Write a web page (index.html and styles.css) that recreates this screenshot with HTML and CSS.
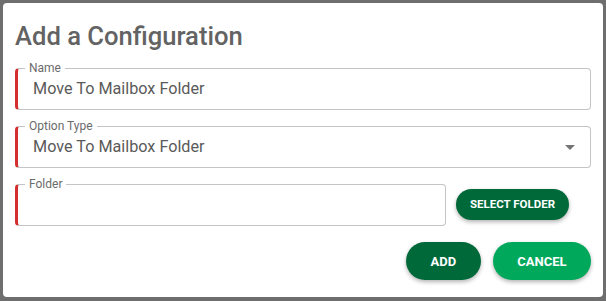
FILE: index.html
```html
<!DOCTYPE html>
<html lang="en">
<head>
<meta charset="utf-8">
<title>Add a Configuration</title>
<link rel="stylesheet" href="styles.css">
</head>
<body>
<div class="dialog">
  <h1 class="title">Add a Configuration</h1>
  <fieldset class="field">
    <legend class="label">Name</legend>
    <div class="value">Move To Mailbox Folder</div>
  </fieldset>
  <fieldset class="field">
    <legend class="label">Option Type</legend>
    <div class="select-row">
      <div class="value">Move To Mailbox Folder</div>
      <svg class="arrow" width="10" height="5" viewBox="0 0 10 5"><path d="M0 0l5 5 5-5z" fill="#757575"/></svg>
    </div>
  </fieldset>
  <div class="folder-row">
    <fieldset class="field folder">
      <legend class="label">Folder</legend>
      <div class="value">&nbsp;</div>
    </fieldset>
    <button class="btn btn-dark btn-small">Select Folder</button>
  </div>
  <div class="actions">
    <button class="btn btn-dark btn-large">Add</button>
    <button class="btn btn-light btn-large">Cancel</button>
  </div>
</div>
</body>
</html>
```

FILE: styles.css
```css
html, body {
  margin: 0;
  padding: 0;
}
body {
  background: #6e6e6e;
  width: 606px;
  height: 301px;
  overflow: hidden;
  font-family: Roboto, "Liberation Sans", sans-serif;
}
.dialog {
  box-sizing: border-box;
  margin: 3px;
  width: 600px;
  height: 294px;
  background: #fff;
  border-radius: 4px;
  padding: 19px 12px 0 12px;
}
.title {
  margin: 0 0 11px 0;
  font-size: 25.6px;
  line-height: 28px;
  font-weight: 500;
  color: #636363;
}
.field {
  margin: 0 0 9px 0;
  border: 1px solid #c4c4c4;
  border-left: 3px solid #d32f2f;
  border-radius: 4px;
  padding: 4px 12px 11px 15px;
  min-width: 0;
}
.label {
  margin-left: -8px;
  padding: 0 4px;
  font-size: 12px;
  line-height: 14px;
  color: #6b6b6b;
}
.value {
  font-size: 16.2px;
  line-height: 19px;
  color: #5a5a5a;
}
.select-row {
  display: flex;
  align-items: center;
  justify-content: space-between;
}
.arrow {
  margin-right: 3px;
  margin-top: 2px;
}
.folder-row {
  display: flex;
  align-items: center;
}
.folder {
  flex: 1;
  margin: 0;
}
.btn {
  border: none;
  font-family: Roboto, "Liberation Sans", sans-serif;
  font-weight: 700;
  text-transform: uppercase;
  color: #fff;
  box-shadow: 0 2px 4px rgba(0, 0, 0, 0.3);
  cursor: pointer;
}
.btn-dark {
  background: #00693a;
}
.btn-light {
  background: #00a85c;
}
.btn-small {
  height: 31px;
  border-radius: 16px;
  padding: 0 14px;
  font-size: 11.5px;
  margin: 5px 22px 0 10px;
}
.actions {
  display: flex;
  justify-content: flex-end;
  gap: 12px;
  margin-top: 16px;
}
.btn-large {
  height: 38px;
  border-radius: 19px;
  padding: 0 24.5px;
  font-size: 13px;
}
```
